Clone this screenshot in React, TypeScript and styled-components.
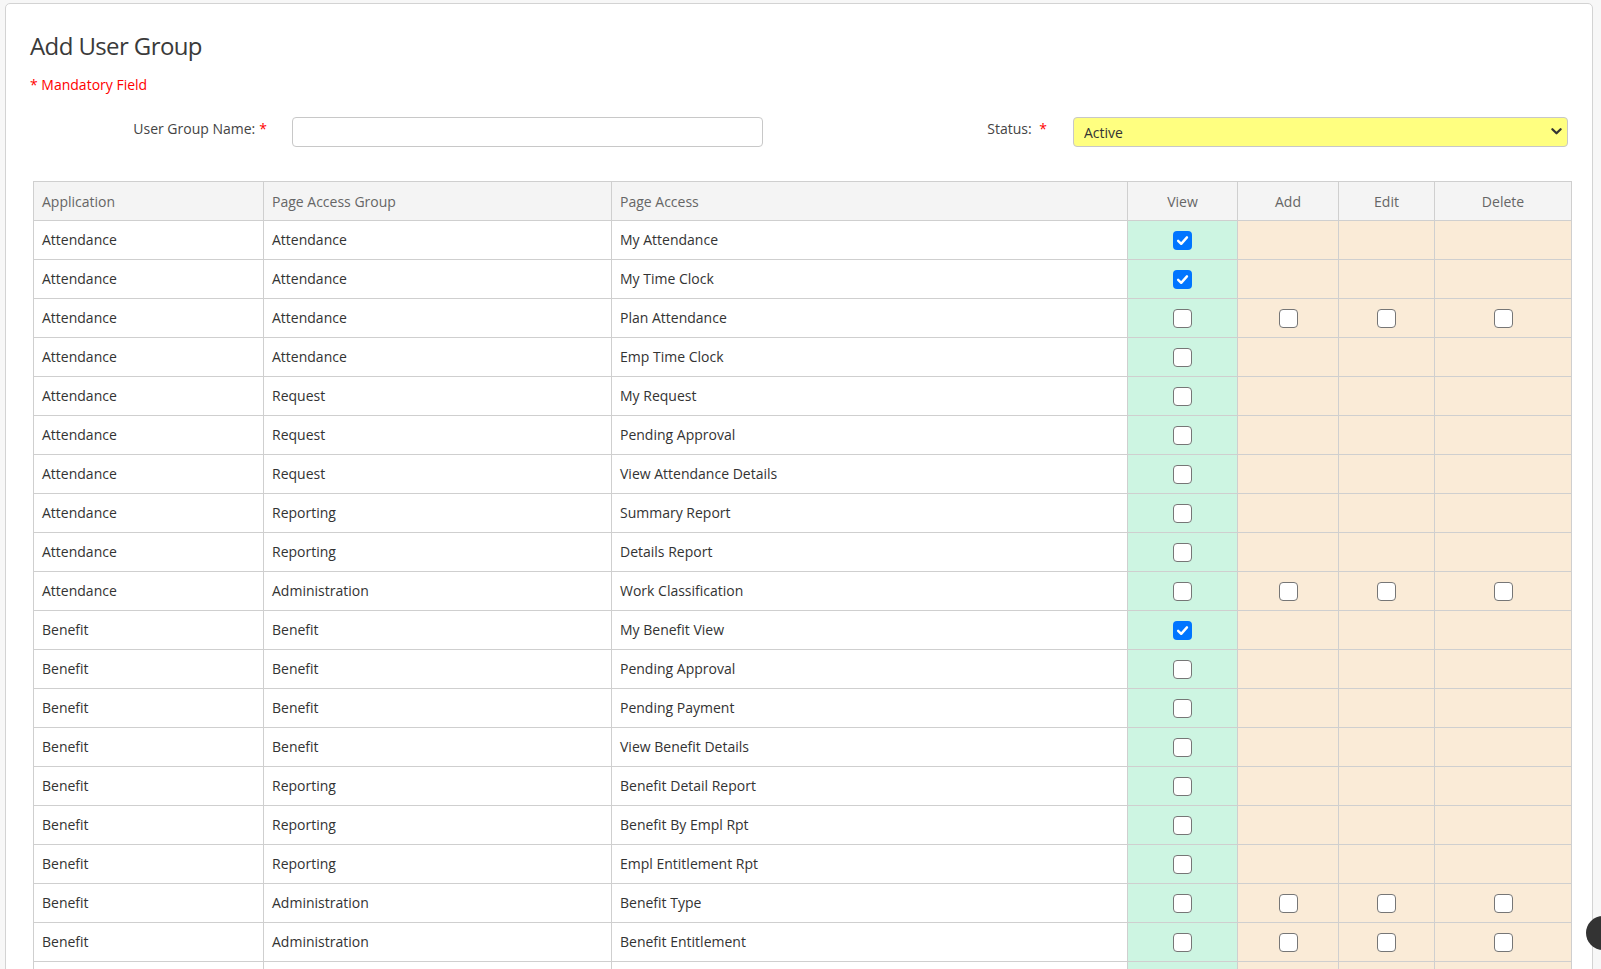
import React from "react";
import styled, { createGlobalStyle } from "styled-components";

const GlobalStyle = createGlobalStyle`
  html, body {
    margin: 0;
    padding: 0;
    background: #f7f7f7;
    font-family: "Open Sans", "Noto Sans", Arial, sans-serif;
    color: #333;
  }
  * { box-sizing: border-box; }
`;

const Page = styled.div`
  padding: 3px 8px 40px 5px;
`;

const Card = styled.div`
  background: #fff;
  border: 1px solid #d3d3d3;
  border-radius: 5px;
  padding: 26px 21px 0 0;
`;

const Head = styled.div`
  padding-left: 24px;
`;

const Title = styled.h1`
  margin: 0;
  font-size: 24px;
  line-height: 32px;
  font-weight: 400;
  letter-spacing: -0.6px;
  color: #3a3a3a;
`;

const Mandatory = styled.div`
  margin-top: 13px;
  font-size: 14px;
  line-height: 20px;
  color: #ff0000;
`;

const FormRow = styled.div`
  display: flex;
  align-items: flex-start;
  margin: 22px 0 0 27px;
`;

const Label = styled.label<{ $w: number }>`
  width: ${(p) => p.$w}px;
  flex: none;
  text-align: right;
  font-size: 14px;
  line-height: 20px;
  padding-top: 2px;
  color: #444;
`;

const Star = styled.span`
  color: #ff0000;
  margin-left: 4px;
`;

const TextInput = styled.input`
  width: 471px;
  height: 30px;
  margin-left: 25px;
  border: 1px solid #c8c8c8;
  border-radius: 4px;
  padding: 0 10px;
  font-family: inherit;
  font-size: 14px;
  background: #fff;
`;

const SelectWrap = styled.div`
  position: relative;
  flex: 1;
  margin-left: 26px;
  margin-right: 3px;
`;

const Select = styled.select`
  appearance: none;
  width: 100%;
  height: 30px;
  border: 1px solid #c8c8c8;
  border-radius: 4px;
  background: #ffff80;
  padding: 0 30px 0 10px;
  font-family: inherit;
  font-size: 14px;
  color: #333;
`;

const Chevron = styled.svg`
  position: absolute;
  right: 6px;
  top: 10px;
  pointer-events: none;
`;

const TableWrap = styled.div`
  margin: 34px 0 0 27px;
`;

const Table = styled.table`
  width: 1538px;
  border-collapse: collapse;
  table-layout: fixed;
  font-size: 14px;
`;

const Th = styled.th<{ $center?: boolean }>`
  height: 39px;
  padding: 0 8px;
  border: 1px solid #cfcfcf;
  background: #f4f4f4;
  font-weight: 400;
  color: #666;
  text-align: ${(p) => (p.$center ? "center" : "left")};
  vertical-align: middle;
`;

type Tone = "plain" | "view" | "perm";

const Td = styled.td<{ $tone: Tone }>`
  height: 39px;
  padding: 0 8px;
  border: 1px solid #cfcfcf;
  color: #333;
  vertical-align: middle;
  text-align: ${(p) => (p.$tone === "plain" ? "left" : "center")};
  background: ${(p) =>
    p.$tone === "view" ? "#cdf5e2" : p.$tone === "perm" ? "#faebd7" : "#fff"};
  line-height: 0;
  & > span.txt { line-height: 20px; }
`;

const Box = styled.span<{ $on: boolean }>`
  display: inline-flex;
  align-items: center;
  justify-content: center;
  width: 19px;
  height: 19px;
  border-radius: 4px;
  border: ${(p) => (p.$on ? "none" : "1.5px solid #767676")};
  background: ${(p) => (p.$on ? "#0075ff" : "#fff")};
  vertical-align: middle;
`;

const Fab = styled.div`
  position: fixed;
  top: 916px;
  right: -19px;
  width: 34px;
  height: 34px;
  border-radius: 50%;
  background: #333;
  color: #fff;
  display: flex;
  align-items: center;
  justify-content: center;
  font-size: 18px;
  font-weight: 700;
  line-height: 1;
`;

const Check = ({ on }: { on: boolean }) => (
  <Box $on={on} role="checkbox" aria-checked={on}>
    {on && (
      <svg width="13" height="13" viewBox="0 0 14 14">
        <path
          d="M2.3 7.4 L5.6 10.6 L11.8 3.6"
          fill="none"
          stroke="#fff"
          strokeWidth="2.6"
          strokeLinecap="round"
          strokeLinejoin="round"
        />
      </svg>
    )}
  </Box>
);

type Row = [string, string, string, boolean, boolean];

const rows: Row[] = [
  ["Attendance", "Attendance", "My Attendance", true, false],
  ["Attendance", "Attendance", "My Time Clock", true, false],
  ["Attendance", "Attendance", "Plan Attendance", false, true],
  ["Attendance", "Attendance", "Emp Time Clock", false, false],
  ["Attendance", "Request", "My Request", false, false],
  ["Attendance", "Request", "Pending Approval", false, false],
  ["Attendance", "Request", "View Attendance Details", false, false],
  ["Attendance", "Reporting", "Summary Report", false, false],
  ["Attendance", "Reporting", "Details Report", false, false],
  ["Attendance", "Administration", "Work Classification", false, true],
  ["Benefit", "Benefit", "My Benefit View", true, false],
  ["Benefit", "Benefit", "Pending Approval", false, false],
  ["Benefit", "Benefit", "Pending Payment", false, false],
  ["Benefit", "Benefit", "View Benefit Details", false, false],
  ["Benefit", "Reporting", "Benefit Detail Report", false, false],
  ["Benefit", "Reporting", "Benefit By Empl Rpt", false, false],
  ["Benefit", "Reporting", "Empl Entitlement Rpt", false, false],
  ["Benefit", "Administration", "Benefit Type", false, true],
  ["Benefit", "Administration", "Benefit Entitlement", false, true],
  ["Benefit", "Administration", "Benefit Group", false, true],
  ["Benefit", "Administration", "Benefit Category", false, true],
];

const widths = [230, 348, 516, 110, 101, 96, 137];

export default function App() {
  return (
    <>
      <GlobalStyle />
      <Page>
        <Card>
          <Head>
            <Title>Add User Group</Title>
            <Mandatory>* Mandatory Field</Mandatory>
          </Head>
          <FormRow>
            <Label $w={234}>
              User Group Name:<Star>*</Star>
            </Label>
            <TextInput type="text" />
            <Label $w={284}>
              Status:<Star>&nbsp;*</Star>
            </Label>
            <SelectWrap>
              <Select defaultValue="Active">
                <option>Active</option>
                <option>Inactive</option>
              </Select>
              <Chevron width="11" height="9" viewBox="0 0 12 9">
                <path
                  d="M1.5 2 L6 6.5 L10.5 2"
                  fill="none"
                  stroke="#333"
                  strokeWidth="2.4"
                  strokeLinecap="round"
                  strokeLinejoin="round"
                />
              </Chevron>
            </SelectWrap>
          </FormRow>
          <TableWrap>
            <Table>
              <colgroup>
                {widths.map((w, i) => (
                  <col key={i} style={{ width: w }} />
                ))}
              </colgroup>
              <thead>
                <tr>
                  <Th>Application</Th>
                  <Th>Page Access Group</Th>
                  <Th>Page Access</Th>
                  <Th $center>View</Th>
                  <Th $center>Add</Th>
                  <Th $center>Edit</Th>
                  <Th $center>Delete</Th>
                </tr>
              </thead>
              <tbody>
                {rows.map(([app, grp, page, viewOn, full], i) => (
                  <tr key={i}>
                    <Td $tone="plain"><span className="txt">{app}</span></Td>
                    <Td $tone="plain"><span className="txt">{grp}</span></Td>
                    <Td $tone="plain"><span className="txt">{page}</span></Td>
                    <Td $tone="view"><Check on={viewOn} /></Td>
                    <Td $tone="perm">{full && <Check on={false} />}</Td>
                    <Td $tone="perm">{full && <Check on={false} />}</Td>
                    <Td $tone="perm">{full && <Check on={false} />}</Td>
                  </tr>
                ))}
              </tbody>
            </Table>
          </TableWrap>
        </Card>
      </Page>
      <Fab>⋮</Fab>
    </>
  );
}
